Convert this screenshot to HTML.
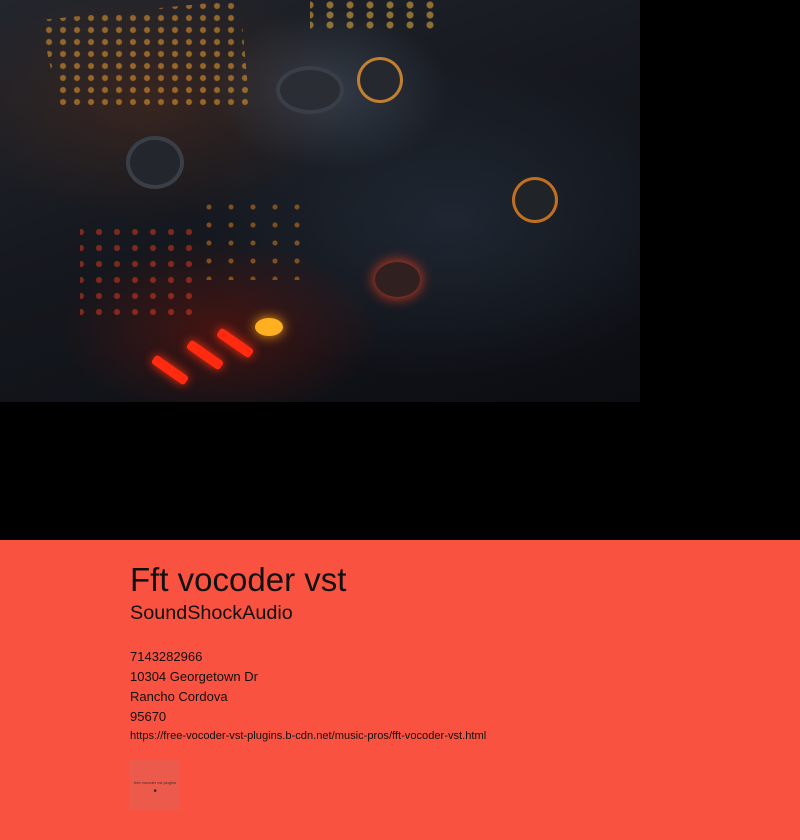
<!DOCTYPE html>
<html><head><meta charset="utf-8"><style>
html,body{margin:0;padding:0;width:800px;height:840px;overflow:hidden;background:#000;font-family:"Liberation Sans",Arial,sans-serif;}
.img{position:absolute;left:0;top:0;width:640px;height:402px;overflow:hidden;
background:
radial-gradient(ellipse 120px 80px at 330px 90px, rgba(70,80,95,.6), transparent),
radial-gradient(ellipse 200px 120px at 150px 100px, rgba(90,45,25,.45), transparent),
radial-gradient(ellipse 160px 90px at 220px 330px, rgba(120,20,10,.5), transparent),
radial-gradient(ellipse 260px 160px at 450px 220px, rgba(40,50,65,.6), transparent),
linear-gradient(160deg,#23262d 0%,#15181e 45%,#0b0d12 100%);}
.d{position:absolute;border-radius:50%;}
.red{position:absolute;background:#ff2a10;border-radius:3px;box-shadow:0 0 10px #ff3010;}
.band{position:absolute;left:0;top:540px;width:800px;height:300px;background:#fa5240;}
.c{position:absolute;left:130px;color:#111;white-space:nowrap;}
</style></head><body>
<div class="img">
<div class="d" style="left:280px;top:70px;width:60px;height:40px;background:#2a2d33;box-shadow:0 0 0 4px #3a3f47"></div>
<div class="d" style="left:130px;top:140px;width:50px;height:45px;background:#23262c;box-shadow:0 0 0 4px #3a3f47"></div>
<div class="d" style="left:515px;top:180px;width:40px;height:40px;background:#202328;box-shadow:0 0 0 3px #c07020"></div>
<div class="d" style="left:375px;top:262px;width:45px;height:35px;background:#302020;box-shadow:0 0 14px #ff4020"></div>
<div class="d" style="left:360px;top:60px;width:40px;height:40px;background:#25282e;box-shadow:0 0 0 3px #c08030"></div>
<div class="red" style="left:150px;top:365px;width:40px;height:10px;transform:rotate(35deg)"></div>
<div class="red" style="left:185px;top:350px;width:40px;height:10px;transform:rotate(35deg)"></div>
<div class="red" style="left:215px;top:338px;width:40px;height:10px;transform:rotate(35deg)"></div>
<div class="d" style="left:255px;top:318px;width:28px;height:18px;background:#ffb020;box-shadow:0 0 12px #ffa010"></div>
<div style="position:absolute;left:0;top:0;width:640px;height:402px;background-image:radial-gradient(circle,#ffa830 0 2.5px,transparent 3.5px);background-size:14px 12px;clip-path:polygon(40px 20px,240px 0,250px 110px,60px 110px);opacity:.5"></div>
<div style="position:absolute;left:0;top:0;width:640px;height:402px;background-image:radial-gradient(circle,#ff4020 0 2.5px,transparent 3.5px);background-size:18px 16px;clip-path:polygon(80px 220px,200px 220px,200px 320px,80px 320px);opacity:.45"></div>
<div style="position:absolute;left:0;top:0;width:640px;height:402px;background-image:radial-gradient(circle,#ffc040 0 3px,transparent 4px);background-size:20px 10px;clip-path:polygon(310px 0,440px 0,440px 30px,310px 30px);opacity:.5"></div>
<div style="position:absolute;left:0;top:0;width:640px;height:402px;background-image:radial-gradient(circle,#ff9020 0 2px,transparent 3px);background-size:22px 18px;clip-path:polygon(190px 200px,310px 200px,310px 280px,190px 280px);opacity:.45"></div>
</div>
<div class="band"></div>
<div class="c" style="top:561px;font-size:33px;">Fft vocoder vst</div>
<div class="c" style="top:602px;font-size:19.8px;">SoundShockAudio</div>
<div class="c" style="top:647px;font-size:13px;line-height:20px;">7143282966<br>10304 Georgetown Dr<br>Rancho Cordova<br>95670</div>
<div class="c" style="top:730px;font-size:11.1px;">https://free-vocoder-vst-plugins.b-cdn.net/music-pros/fft-vocoder-vst.html</div>
<div style="position:absolute;left:130px;top:760px;width:50px;height:50px;background:#ec5a4c;font-size:4px;color:#333;text-align:center;">
<div style="padding-top:20px">free vocoder vst plugins</div><div style="font-size:5px;margin-top:3px">■</div></div>
</body></html>
